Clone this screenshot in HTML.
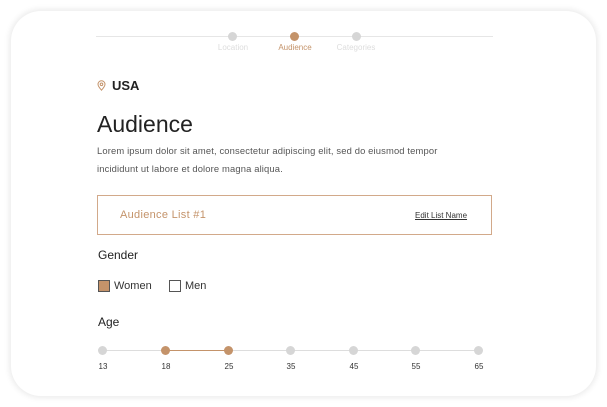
<!DOCTYPE html><html><head><style>
body{margin:0;width:607px;height:407px;background:#fff;font-family:"Liberation Sans",sans-serif;position:relative;overflow:hidden}
.card{position:absolute;left:11px;top:11px;width:585px;height:385px;border-radius:30px;background:#fff;box-shadow:0 0 6px 2px rgba(0,0,0,0.08)}
.a{position:absolute}
.dot{position:absolute;width:9px;height:9px;border-radius:50%;background:#d6d6d6}
.lbl{position:absolute;font-size:8px;color:#ddd;transform:translateX(-50%)}
.tick{position:absolute;font-size:8px;color:#333;transform:translateX(-50%);top:362px}
</style></head><body>
<div class="card"></div>
<div class="a" style="left:96px;top:36px;width:397px;height:1px;background:#e6e6e6"></div>
<div class="dot" style="left:228px;top:32px"></div>
<div class="dot" style="left:290px;top:32px;background:#c4936a"></div>
<div class="dot" style="left:352px;top:32px"></div>
<div class="lbl" style="left:233px;top:43px">Location</div>
<div class="lbl" style="left:295px;top:43px;color:#c4936a">Audience</div>
<div class="lbl" style="left:356px;top:43px">Categories</div>
<svg class="a" style="left:97px;top:80px" width="9" height="11" viewBox="0 0 9 11"><path d="M4.5 10.2C2.5 8 1 6.3 1 4.3a3.5 3.5 0 0 1 7 0C8 6.3 6.5 8 4.5 10.2z" fill="none" stroke="#c4936a" stroke-width="1"/><circle cx="4.5" cy="4.3" r="1.3" fill="none" stroke="#c4936a" stroke-width="1"/></svg>
<div class="a" style="left:112px;top:78px;font-size:13px;font-weight:bold;color:#222">USA</div>
<div class="a" style="left:97px;top:111px;font-size:23px;color:#222">Audience</div>
<div class="a" style="left:97px;top:142px;font-size:9.4px;letter-spacing:0.15px;color:#555;line-height:18px;width:360px">Lorem ipsum dolor sit amet, consectetur adipiscing elit, sed do eiusmod tempor incididunt ut labore et dolore magna aliqua.</div>
<div class="a" style="left:97px;top:195px;width:393px;height:38px;border:1.5px solid #d2a98a"></div>
<div class="a" style="left:120px;top:209px;font-size:11px;letter-spacing:0.3px;color:#c4936a">Audience List #1</div>
<div class="a" style="left:415px;top:211px;font-size:8px;color:#333;text-decoration:underline">Edit List Name</div>
<div class="a" style="left:98px;top:248px;font-size:12px;color:#222">Gender</div>
<div class="a" style="left:98px;top:280px;width:10px;height:10px;background:#c4936a;border:1px solid #555"></div>
<div class="a" style="left:114px;top:280px;font-size:11px;color:#333">Women</div>
<div class="a" style="left:169px;top:280px;width:10px;height:10px;border:1px solid #555"></div>
<div class="a" style="left:185px;top:280px;font-size:11px;color:#333">Men</div>
<div class="a" style="left:98px;top:315px;font-size:12px;color:#222">Age</div>
<div class="a" style="left:103px;top:350px;width:376px;height:1px;background:#ddd"></div>
<div class="a" style="left:165px;top:350px;width:63px;height:1px;background:#c4936a"></div>
<div class="dot" style="left:98px;top:346px"></div>
<div class="dot" style="left:161px;top:346px;background:#c4936a"></div>
<div class="dot" style="left:224px;top:346px;background:#c4936a"></div>
<div class="dot" style="left:286px;top:346px"></div>
<div class="dot" style="left:349px;top:346px"></div>
<div class="dot" style="left:411px;top:346px"></div>
<div class="dot" style="left:474px;top:346px"></div>
<div class="tick" style="left:103px">13</div>
<div class="tick" style="left:166px">18</div>
<div class="tick" style="left:229px">25</div>
<div class="tick" style="left:291px">35</div>
<div class="tick" style="left:354px">45</div>
<div class="tick" style="left:416px">55</div>
<div class="tick" style="left:479px">65</div>
</body></html>
